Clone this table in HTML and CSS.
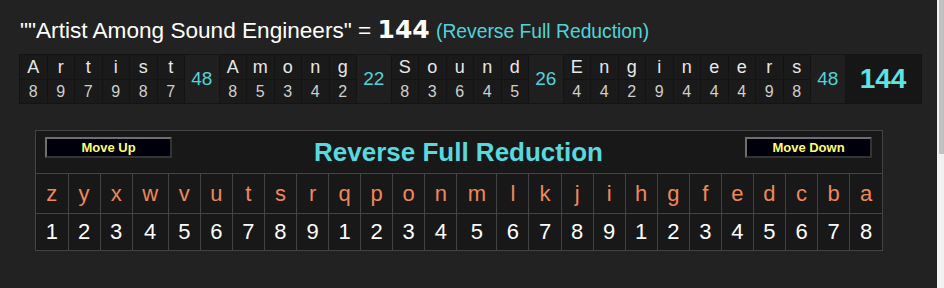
FILE: index.html
```html
<!DOCTYPE HTML>
<html>
	<head>
		<meta charset="utf-8">
		<title>Reverse Full Reduction</title>
		<link rel="stylesheet" href="styles.css">
	</head>
	<body>

		<div class="page">

			<h1 class="phrase">
				""Artist Among Sound Engineers" = <b class="phrase-total">144</b>
				<span class="phrase-cipher">(Reverse Full Reduction)</span>
			</h1>

			<!-- letter by letter breakdown, one sum per word -->
			<table class="breakdown">
				<tr>
					<td class="breakdown-letter">A</td><td class="breakdown-letter">r</td><td class="breakdown-letter">t</td><td class="breakdown-letter">i</td><td class="breakdown-letter">s</td><td class="breakdown-letter">t</td>
					<td class="breakdown-sum" rowspan="2">48</td>
					<td class="breakdown-letter">A</td><td class="breakdown-letter">m</td><td class="breakdown-letter">o</td><td class="breakdown-letter">n</td><td class="breakdown-letter">g</td>
					<td class="breakdown-sum" rowspan="2">22</td>
					<td class="breakdown-letter">S</td><td class="breakdown-letter">o</td><td class="breakdown-letter">u</td><td class="breakdown-letter">n</td><td class="breakdown-letter">d</td>
					<td class="breakdown-sum" rowspan="2">26</td>
					<td class="breakdown-letter">E</td><td class="breakdown-letter">n</td><td class="breakdown-letter">g</td><td class="breakdown-letter">i</td><td class="breakdown-letter">n</td><td class="breakdown-letter">e</td><td class="breakdown-letter">e</td><td class="breakdown-letter">r</td><td class="breakdown-letter">s</td>
					<td class="breakdown-sum" rowspan="2">48</td>
					<td class="breakdown-total" rowspan="2">144</td>
				</tr>
				<tr>
					<td>8</td><td>9</td><td>7</td><td>9</td><td>8</td><td>7</td>
					<td>8</td><td>5</td><td>3</td><td>4</td><td>2</td>
					<td>8</td><td>3</td><td>6</td><td>4</td><td>5</td>
					<td>4</td><td>4</td><td>2</td><td>9</td><td>4</td><td>4</td><td>4</td><td>9</td><td>8</td>
				</tr>
			</table>

			<!-- cipher key -->
			<div class="cipher-panel">
				<div class="cipher-panel-header">
					<button class="cipher-button" type="button">Move Up</button>
					<h2 class="cipher-title">Reverse Full Reduction</h2>
					<button class="cipher-button" type="button">Move Down</button>
				</div>
				<table class="cipher-table">
					<tr class="cipher-letters">
						<td>z</td><td>y</td><td>x</td><td class="wide">w</td><td>v</td><td>u</td><td>t</td><td>s</td><td>r</td><td>q</td><td>p</td><td>o</td><td>n</td><td class="wider">m</td><td>l</td><td>k</td><td>j</td><td>i</td><td>h</td><td>g</td><td>f</td><td>e</td><td>d</td><td>c</td><td>b</td><td>a</td>
					</tr>
					<tr class="cipher-values">
						<td>1</td><td>2</td><td>3</td><td>4</td><td>5</td><td>6</td><td>7</td><td>8</td><td>9</td><td>1</td><td>2</td><td>3</td><td>4</td><td>5</td><td>6</td><td>7</td><td>8</td><td>9</td><td>1</td><td>2</td><td>3</td><td>4</td><td>5</td><td>6</td><td>7</td><td>8</td>
					</tr>
				</table>
			</div>

		</div>

		<div class="scrollbar"><div class="scrollbar-thumb"></div></div>

	</body>
</html>
```

FILE: styles.css
```css
* {
	box-sizing:				border-box;
}

html,
body {
	background:				#222222;
	color:					#ffffff;
	font-family:			"Liberation Sans", Arial, Helvetica, sans-serif;
	height:					100%;
}

body {
	margin:					0;
	padding:				0;
	overflow:				hidden;
}

.page {
	padding:				13px 0 0 19px;
}

.phrase {
	font-size:				22.6px;
	font-weight:			normal;
	line-height:			34px;
	margin:					0 0 5px 1px;
	white-space:			nowrap;
}

.phrase-total {
	font-family:			"DejaVu Sans", Verdana, sans-serif;
	font-size:				25px;
	font-weight:			bold;
}

.phrase-cipher {
	color:					#52d3da;
	font-size:				19.3px;
}

/* word breakdown */

.breakdown {
	background:				#1a1a1a;
	border-collapse:		collapse;
	table-layout:			fixed;
	width:					901px;
}

.breakdown td {
	border:					1px solid #141414;
	color:					#cfcfcf;
	font-size:				16px;
	height:					24px;
	padding:				0;
	text-align:				center;
	width:					27.5px;
}

.breakdown td.breakdown-letter {
	color:					#e8e8e8;
	font-size:				18px;
	height:					25px;
}

.breakdown td.breakdown-sum {
	background:				#1f1f1f;
	color:					#52d3da;
	font-size:				19px;
	width:					34.5px;
}

.breakdown td.breakdown-total {
	background:				#161616;
	color:					#5ee2e2;
	font-size:				28px;
	font-weight:			bold;
	width:					76px;
}

/* cipher key */

.cipher-panel {
	background:				#181818;
	border:					1px solid #444444;
	margin:					26px 0 0 16px;
	width:					848px;
}

.cipher-panel-header {
	align-items:			flex-start;
	display:				flex;
	height:					42px;
	justify-content:		space-between;
	padding:				6px 10px 0 9px;
}

.cipher-button {
	background:				#00000c;
	border:					2px solid;
	border-color:			#6e6e6e #333333 #333333 #6e6e6e;
	color:					#ffff70;
	font-family:			"Liberation Sans", Arial, sans-serif;
	font-size:				13px;
	font-weight:			bold;
	height:					21px;
	line-height:			15px;
	padding:				0;
	width:					127px;
}

.cipher-title {
	color:					#5ad8de;
	font-size:				26px;
	font-weight:			bold;
	line-height:			28px;
	margin:					1px 0 0;
}

.cipher-table {
	border-collapse:		collapse;
	table-layout:			fixed;
	width:					100%;
}

.cipher-table td {
	border:					1px solid #444444;
	font-size:				22px;
	padding:				0;
	text-align:				center;
	width:					32px;
}

.cipher-table td:first-child {
	border-left:			none;
}

.cipher-table td:last-child {
	border-right:			none;
}

.cipher-table tr:last-child td {
	border-bottom:			none;
}

.cipher-table td.wide {
	width:					36px;
}

.cipher-table td.wider {
	width:					40px;
}

.cipher-letters td {
	color:					#f0875a;
	height:					40px;
}

.cipher-values td {
	color:					#ffffff;
	height:					36px;
}

/* page scrollbar */

.scrollbar {
	background:				#f1f1f1;
	height:					100%;
	position:				fixed;
	right:					0;
	top:					0;
	width:					7px;
}

.scrollbar-thumb {
	background:				#c1c1c1;
	height:					154px;
	margin-left:			2px;
}
```
